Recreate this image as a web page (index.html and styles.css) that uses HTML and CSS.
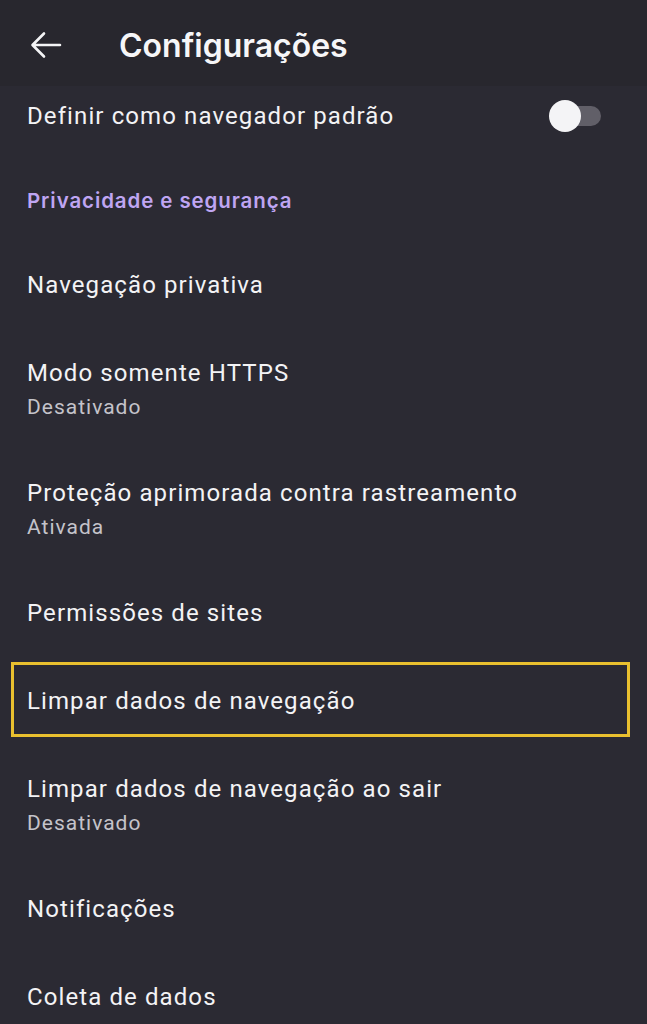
FILE: index.html
```html
<!DOCTYPE html>
<html lang="pt-BR">
<head>
    <meta charset="UTF-8">
    <meta name="viewport" content="width=device-width, initial-scale=1.0">
    <title>Configurações</title>
    <link rel="stylesheet" href="styles.css">
</head>
<body>

    <!-- Barra superior -->
    <header class="top-bar">
        <svg class="back-icon" width="32" height="28" viewBox="0 0 32 28" aria-hidden="true">
            <path d="M30 14H3M14 2.5L2.5 14L14 25.5" fill="none" stroke="#f4f4f6" stroke-width="2.6" stroke-linecap="round" stroke-linejoin="round"/>
        </svg>
        <h1 class="top-title">Configurações</h1>
    </header>

    <!-- Lista de preferências -->
    <main class="pref-list">
        <div class="pref-row pref-first">
            <span class="pref-title">Definir como navegador padrão</span>
            <span class="toggle"><span class="toggle-knob"></span></span>
        </div>

        <div class="pref-section">Privacidade e segurança</div>

        <div class="pref-row">
            <span class="pref-title">Navegação privativa</span>
        </div>
        <div class="pref-row">
            <div class="pref-text">
                <span class="pref-title">Modo somente HTTPS</span>
                <span class="pref-summary">Desativado</span>
            </div>
        </div>
        <div class="pref-row">
            <div class="pref-text">
                <span class="pref-title">Proteção aprimorada contra rastreamento</span>
                <span class="pref-summary">Ativada</span>
            </div>
        </div>
        <div class="pref-row">
            <span class="pref-title">Permissões de sites</span>
        </div>
        <div class="pref-row highlighted">
            <span class="pref-title">Limpar dados de navegação</span>
        </div>
        <div class="pref-row">
            <div class="pref-text">
                <span class="pref-title">Limpar dados de navegação ao sair</span>
                <span class="pref-summary">Desativado</span>
            </div>
        </div>
        <div class="pref-row">
            <span class="pref-title">Notificações</span>
        </div>
        <div class="pref-row">
            <span class="pref-title">Coleta de dados</span>
        </div>
    </main>

</body>
</html>
```

FILE: styles.css
```css
body {
    margin: 0;
    height: 1024px;
    overflow: hidden;
    background-color: #2b2a33;
    color: #f3f3f5;
    font-family: Roboto, "Noto Sans", sans-serif;
}

/* Barre du haut */
.top-bar {
    display: flex;
    align-items: center;
    height: 86px;
    padding: 4px 0 0 30px;
    box-sizing: border-box;
    background-color: #28272e;
}

.back-icon {
    display: block;
}

.top-title {
    margin: 0 0 0 57px;
    font-family: Inter, "Open Sans", sans-serif;
    font-weight: 600;
    font-size: 32px;
    color: #f6f6f8;
}

/* Lignes */
.pref-list {
    display: flex;
    flex-direction: column;
}

.pref-row {
    position: relative;
    display: flex;
    align-items: center;
    justify-content: space-between;
    padding: 26px 46px 26px 27px;
}

.pref-first {
    padding-top: 12px;
    padding-bottom: 24px;
}

.pref-text {
    display: flex;
    flex-direction: column;
}

.pref-title {
    font-size: 24px;
    line-height: 36px;
    letter-spacing: 1.1px;
    color: #f3f3f5;
}

.pref-summary {
    font-size: 21px;
    line-height: 32px;
    letter-spacing: 1px;
    color: #c4c3ca;
}

.pref-section {
    padding: 31px 27px 28px;
    font-family: Inter, "Open Sans", sans-serif;
    font-weight: 600;
    font-size: 20.5px;
    line-height: 24px;
    letter-spacing: 0.9px;
    color: #bfa5f2;
}

/* Interrupteur */
.toggle {
    position: relative;
    width: 42px;
    height: 20px;
    border-radius: 10px;
    background-color: #615f68;
}

.toggle-knob {
    position: absolute;
    left: -10px;
    top: -6px;
    width: 32px;
    height: 32px;
    border-radius: 50%;
    background-color: #f4f4f6;
}

/* Cadre de mise en évidence */
.highlighted::after {
    content: "";
    position: absolute;
    left: 11px;
    right: 17px;
    top: 5px;
    bottom: 8px;
    border: 3px solid #e9c02f;
}
```
